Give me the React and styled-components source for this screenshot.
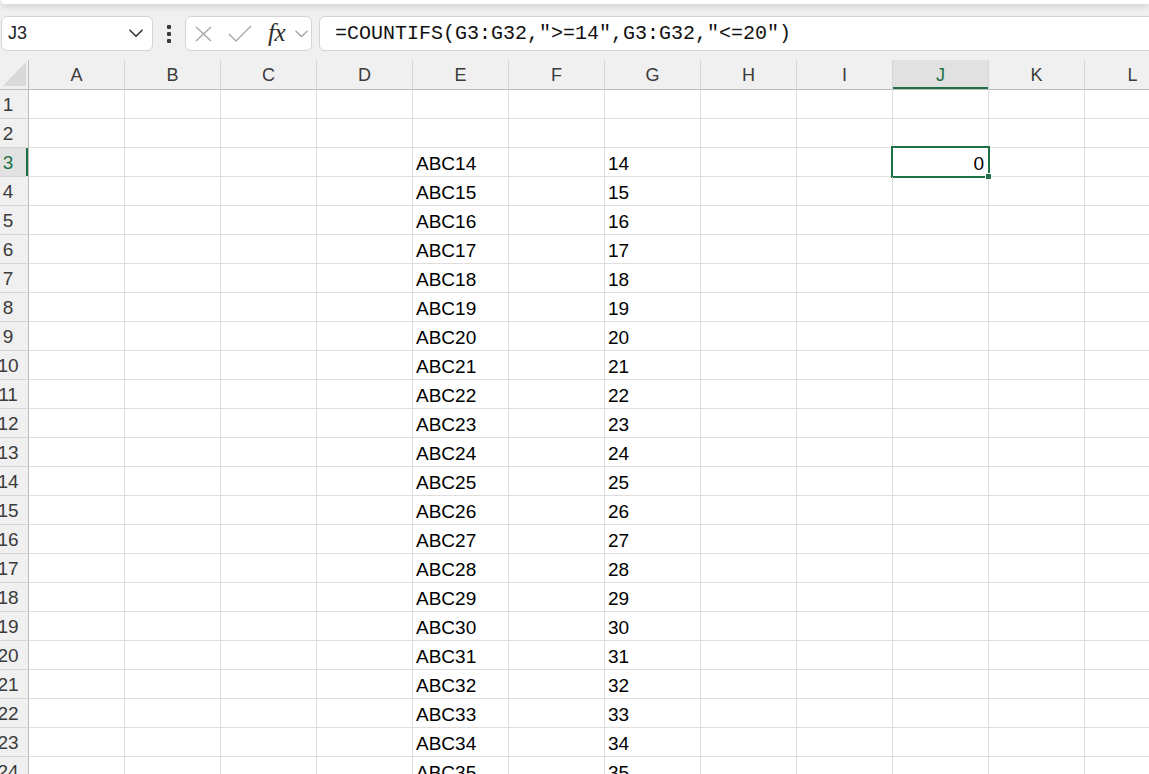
import React from "react";
import styled, { createGlobalStyle, css } from "styled-components";

const GREEN = "#1e7145";
const COLS = ["A", "B", "C", "D", "E", "F", "G", "H", "I", "J", "K", "L"];
const ROW_COUNT = 25;
const FORMULA = '=COUNTIFS(G3:G32,">=14",G3:G32,"<=20")';

// values in the sheet, keyed by column then row
const cellValue = (col, row) => {
  if (col === "E" && row >= 3) return { text: `ABC${row + 11}` };
  if (col === "G" && row >= 3) return { text: String(row + 11) };
  if (col === "J" && row === 3) return { text: "0", right: true };
  return null;
};

const GlobalStyle = createGlobalStyle`
  html, body {
    margin: 0;
    padding: 0;
    background: #f0f0f0;
    overflow: hidden;
  }
  * { box-sizing: border-box; }
`;

const Page = styled.div`
  width: 100vw;
  height: 100vh;
  overflow: hidden;
  display: flex;
  flex-direction: column;
  font-family: "Liberation Sans", Arial, sans-serif;
  & > * {
    flex-shrink: 0;
  }
`;

const TopStrip = styled.div`
  height: 4px;
  margin: 0 0 0 1px;
  background: #fff;
  border-bottom-left-radius: 5px;
  box-shadow: 0 2px 6px rgba(0, 0, 0, 0.18);
  position: relative;
  z-index: 1;
`;

const FormulaBar = styled.div`
  display: flex;
  align-items: center;
  height: 35px;
  margin-top: 12px;
  padding-left: 1px;
  margin-right: -20px;
`;

const Box = styled.div`
  height: 35px;
  background: #fff;
  border: 1px solid #d4d4d4;
  border-radius: 6px;
  display: flex;
  align-items: center;
`;

const NameBox = styled(Box)`
  width: 152px;
  padding: 0 9px 0 6px;
  justify-content: space-between;
  font-size: 18px;
  color: #222;
`;

const Kebab = styled.div`
  width: 32px;
  display: flex;
  flex-direction: column;
  align-items: center;
  gap: 3px;
  span {
    width: 4px;
    height: 4px;
    border-radius: 1px;
    background: #3a3a3a;
  }
`;

const ActionBox = styled(Box)`
  width: 127px;
  padding: 0 0 0 8px;
`;

const IconSlot = styled.div`
  width: ${(p) => p.$w}px;
  display: flex;
  align-items: center;
`;

const Fx = styled.span`
  font-family: "Liberation Serif", "Times New Roman", serif;
  font-style: italic;
  font-size: 25px;
  color: #2b2b2b;
  letter-spacing: -0.5px;
  line-height: 1;
  margin-top: -3px;
`;

const FormulaInput = styled(Box)`
  flex: 1;
  margin-left: 7px;
  padding-left: 15px;
  font-family: "Liberation Mono", "Courier New", monospace;
  font-size: 20px;
  color: #111;
  white-space: nowrap;
`;

const Sheet = styled.div`
  margin-top: 9px;
  display: grid;
  grid-template-columns: 29px repeat(12, 96px);
  grid-template-rows: 30px;
  grid-auto-rows: 29px;
  background: #fff;
`;

const Corner = styled.div`
  background: #f0f0f0;
  border-right: 1px solid #bdbdbd;
  border-bottom: 1px solid #bdbdbd;
  position: relative;
  svg {
    position: absolute;
    left: 3px;
    top: 2px;
  }
`;

const ColHead = styled.div`
  background: ${(p) => (p.$active ? "#e1e1e1" : "#f0f0f0")};
  border-right: 1px solid #d6d6d6;
  border-bottom: 1px solid #bdbdbd;
  display: flex;
  align-items: center;
  justify-content: center;
  padding-top: 2px;
  font-size: 18px;
  color: ${(p) => (p.$active ? GREEN : "#3b3b3b")};
  ${(p) =>
    p.$active &&
    css`
      box-shadow: inset 0 -2px 0 ${GREEN};
    `}
`;

const RowHead = styled.div`
  background: ${(p) => (p.$active ? "#e1e1e1" : "#f0f0f0")};
  border-right: 1px solid #bdbdbd;
  border-bottom: 1px solid #d6d6d6;
  display: flex;
  align-items: center;
  justify-content: center;
  padding: 2px 12px 0 0;
  font-size: 19px;
  color: ${(p) => (p.$active ? GREEN : "#3b3b3b")};
  white-space: nowrap;
  ${(p) =>
    p.$active &&
    css`
      box-shadow: inset -2px 0 0 ${GREEN};
    `}
`;

const Cell = styled.div`
  position: relative;
  border-right: 1px solid #dedede;
  border-bottom: 1px solid #dedede;
  display: flex;
  align-items: center;
  justify-content: ${(p) => (p.$right ? "flex-end" : "flex-start")};
  padding: 3px 4px 0 3px;
  font-size: 19px;
  color: #000;
  white-space: nowrap;
  ${(p) =>
    p.$selected &&
    css`
      &::after {
        content: "";
        position: absolute;
        left: -2px;
        top: -2px;
        right: -2px;
        bottom: -2px;
        border: 2px solid ${GREEN};
        pointer-events: none;
      }
    `}
`;

const FillHandle = styled.span`
  position: absolute;
  right: -4px;
  bottom: -4px;
  width: 7px;
  height: 7px;
  background: ${GREEN};
  border: 1px solid #fff;
  z-index: 1;
`;

const Chevron = ({ size = 14, color = "#333", width = 1.6 }) => (
  <svg width={size} height={size * 0.6} viewBox="0 0 14 8" fill="none">
    <path d="M1 1l6 6 6-6" stroke={color} strokeWidth={width} strokeLinecap="round" strokeLinejoin="round" />
  </svg>
);

const CancelIcon = () => (
  <svg width="19" height="16" viewBox="0 0 19 16" fill="none">
    <path d="M2 1l15 14M17 1L2 15" stroke="#a8a8a8" strokeWidth="1.4" />
  </svg>
);

const EnterIcon = () => (
  <svg width="24" height="17" viewBox="0 0 24 17" fill="none">
    <path d="M1 9l7 7L23 1" stroke="#a8a8a8" strokeWidth="1.4" />
  </svg>
);

const CornerTriangle = () => (
  <svg width="23" height="24" viewBox="0 0 23 24">
    <polygon points="23,0 23,24 0,24" fill="#d9d9d9" />
  </svg>
);

export default function App() {
  const rows = Array.from({ length: ROW_COUNT }, (_, i) => i + 1);
  return (
    <Page>
      <GlobalStyle />
      <TopStrip />
      <FormulaBar>
        <NameBox>
          <span>J3</span>
          <Chevron />
        </NameBox>
        <Kebab>
          <span />
          <span />
          <span />
        </Kebab>
        <ActionBox>
          <IconSlot $w={34}>
            <CancelIcon />
          </IconSlot>
          <IconSlot $w={40}>
            <EnterIcon />
          </IconSlot>
          <IconSlot $w={27}>
            <Fx>fx</Fx>
          </IconSlot>
          <IconSlot $w={14}>
            <Chevron size={13} color="#9a9a9a" width={1.4} />
          </IconSlot>
        </ActionBox>
        <FormulaInput>{FORMULA}</FormulaInput>
      </FormulaBar>

      <Sheet>
        <Corner>
          <CornerTriangle />
        </Corner>
        {COLS.map((c) => (
          <ColHead key={c} $active={c === "J"}>
            {c}
          </ColHead>
        ))}
        {rows.map((r) => (
          <React.Fragment key={r}>
            <RowHead $active={r === 3}>{r}</RowHead>
            {COLS.map((c) => {
              const v = cellValue(c, r);
              const selected = c === "J" && r === 3;
              return (
                <Cell key={c} $right={v?.right} $selected={selected}>
                  {v?.text}
                  {selected && <FillHandle />}
                </Cell>
              );
            })}
          </React.Fragment>
        ))}
      </Sheet>
    </Page>
  );
}
